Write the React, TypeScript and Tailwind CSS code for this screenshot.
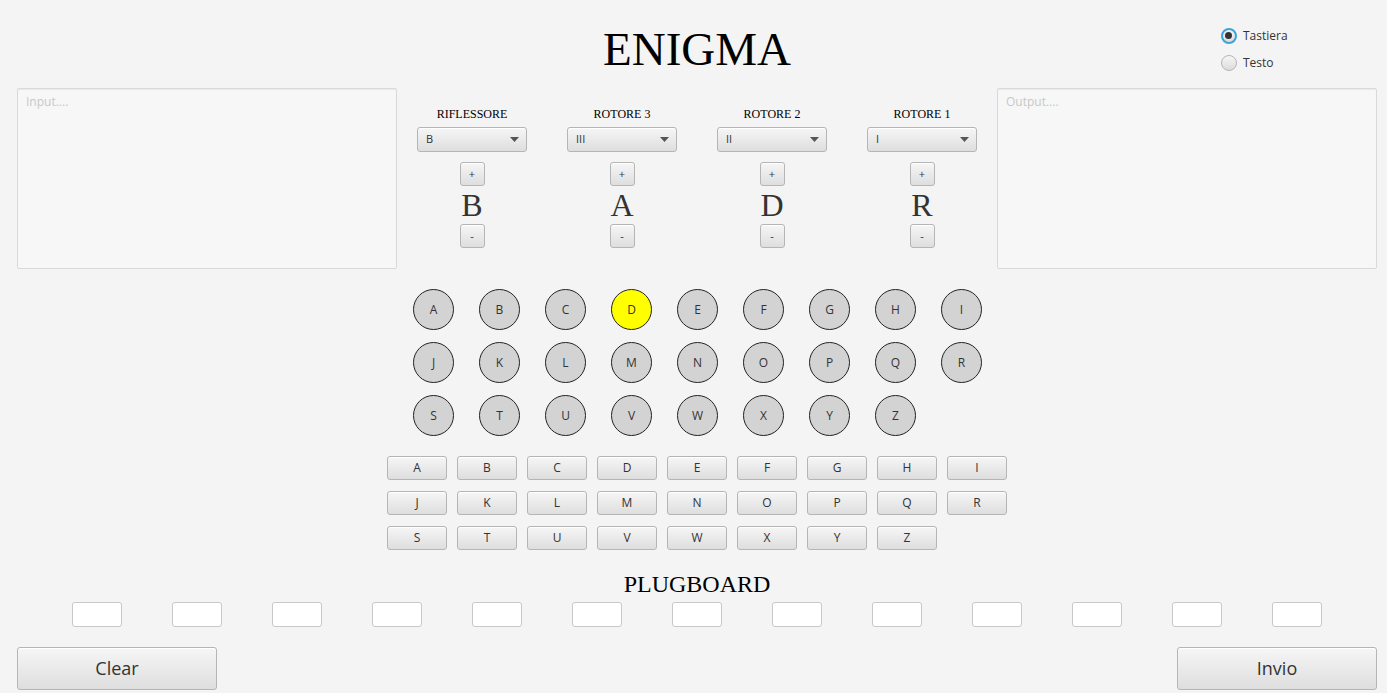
import { useState } from "react";

const ALPHABET: string[] = "ABCDEFGHIJKLMNOPQRSTUVWXYZ".split("");

const ROTORS = [
  { label: "RIFLESSORE", value: "B", letter: "B" },
  { label: "ROTORE 3", value: "III", letter: "A" },
  { label: "ROTORE 2", value: "II", letter: "D" },
  { label: "ROTORE 1", value: "I", letter: "R" },
];

const BTN_SKIN =
  "rounded-[3px] border border-[#b5b5b5] bg-gradient-to-b from-[#f6f6f6] to-[#dedede] text-[#333] shadow-[inset_0_1px_0_#fff]";
const SMALL_BTN = `flex items-center justify-center ${BTN_SKIN}`;

const RotorColumn = ({ label, value, letter }: { label: string; value: string; letter: string }): JSX.Element => {
  return (
    <div className="flex w-[150px] flex-col items-center pt-[18px]">
      <p className="font-['Liberation_Serif',serif] text-[12px] leading-4 text-black">{label}</p>
      <div className={`${BTN_SKIN} mt-[5px] flex h-[25px] w-[110px] items-center justify-between pl-[8px] pr-[7px]`}>
        <span className="font-['Open_Sans',sans-serif] text-[11px] text-[#333]">{value}</span>
        <svg width="9" height="5" viewBox="0 0 9 5">
          <path d="M0 0 L9 0 L4.5 5 Z" fill="#555" />
        </svg>
      </div>
      <button className={`${SMALL_BTN} mt-[10px] h-6 w-[25px] font-['Open_Sans',sans-serif] text-[11px]`}>+</button>
      <div className="flex h-[38px] items-center font-['Liberation_Serif',serif] text-[32px] leading-none text-[#333]">
        {letter}
      </div>
      <button className={`${SMALL_BTN} h-6 w-[25px] font-['Open_Sans',sans-serif] text-[11px]`}>-</button>
    </div>
  );
};

const App = (): JSX.Element => {
  const [mode, setMode] = useState<string>("Tastiera");
  const litLamp = "D";

  return (
    <div className="h-[693px] w-[1387px] overflow-hidden bg-[#f4f4f4] font-['Open_Sans',sans-serif] text-[#333]">
      {/* header */}
      <div className="grid h-[88px] grid-cols-[1fr_auto_1fr]">
        <div />
        <h1 className="pl-[7px] pt-[21px] font-['Liberation_Serif',serif] text-[47px] leading-[56px] text-black">ENIGMA</h1>
        <div className="flex flex-col items-start pl-[430px] pt-[22px]">
          {["Tastiera", "Testo"].map((opt) => (
            <label key={opt} className="flex h-[27px] cursor-pointer items-center gap-[6px]" onClick={() => setMode(opt)}>
              {mode === opt ? (
                <span className="flex h-4 w-4 items-center justify-center rounded-full border-2 border-[#3ea3d8] bg-gradient-to-b from-[#f4f4f4] to-[#dcdcdc]">
                  <span className="h-[7px] w-[7px] rounded-full bg-[#333]" />
                </span>
              ) : (
                <span className="h-4 w-4 rounded-full border border-[#b5b5b5] bg-gradient-to-b from-[#f6f6f6] to-[#dcdcdc]" />
              )}
              <span className="text-[12px] text-[#333]">{opt}</span>
            </label>
          ))}
        </div>
      </div>

      {/* input / rotors / output */}
      <div className="flex h-[181px] pl-[17px]">
        <div className="h-[181px] w-[380px] rounded-[2px] border border-[#d9d9d9] bg-[#f7f7f7] px-[8px] py-[4px] text-[12px] text-[#c8c8c8] shadow-[inset_0_1px_1px_rgba(0,0,0,0.06)]">
          Input....
        </div>
        <div className="flex w-[600px]">
          {ROTORS.map((r) => (
            <RotorColumn key={r.label} label={r.label} value={r.value} letter={r.letter} />
          ))}
        </div>
        <div className="h-[181px] w-[380px] rounded-[2px] border border-[#d9d9d9] bg-[#f7f7f7] px-[8px] py-[4px] text-[12px] text-[#c8c8c8] shadow-[inset_0_1px_1px_rgba(0,0,0,0.06)]">
          Output....
        </div>
      </div>

      {/* lamp board */}
      <div className="grid w-fit grid-cols-[repeat(9,41px)] gap-x-[25px] gap-y-[12px] pl-[413px] pt-[20px]">
        {ALPHABET.map((l) => (
          <div
            key={l}
            className={`flex h-[41px] w-[41px] items-center justify-center rounded-full border border-[#222] text-[12px] text-[#333] ${
              l === litLamp ? "bg-[#ffff00]" : "bg-[#d3d3d3]"
            }`}
          >
            {l}
          </div>
        ))}
      </div>

      {/* keyboard */}
      <div className="grid w-fit grid-cols-[repeat(9,60px)] gap-x-[10px] gap-y-[11px] pl-[387px] pt-[20px]">
        {ALPHABET.map((l) => (
          <button key={l} className={`${SMALL_BTN} h-6 w-[60px] text-[12px]`}>
            {l}
          </button>
        ))}
      </div>

      {/* plugboard */}
      <div className="flex flex-col items-center pt-[20px]">
        <p className="pl-[7px] font-['Liberation_Serif',serif] text-[24px] leading-[28px] text-black">PLUGBOARD</p>
      </div>
      <div className="flex gap-[50px] pl-[72px] pt-[4px]">
        {Array.from({ length: 13 }).map((_, i) => (
          <input
            key={i}
            className="h-[25px] w-[50px] rounded-[3px] border border-[#c8c8c8] bg-white outline-none"
          />
        ))}
      </div>

      {/* bottom buttons */}
      <div className="flex justify-between pl-[17px] pr-[10px] pt-[20px]">
        <button className={`${SMALL_BTN} h-[43px] w-[200px] text-[18px]`}>Clear</button>
        <button className={`${SMALL_BTN} h-[43px] w-[200px] text-[18px]`}>Invio</button>
      </div>
    </div>
  );
};

export default App;
